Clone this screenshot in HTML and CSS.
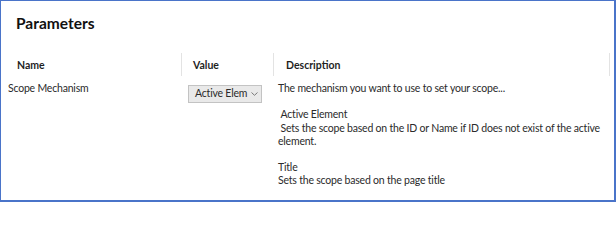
FILE: index.html
```html
<!DOCTYPE html>
<html>
<head>
<meta charset="utf-8">
<link rel="stylesheet" href="styles.css">
</head>
<body>
<div class="frame">
  <h1 class="title">Parameters</h1>
  <div class="table">
    <div class="th th-name">Name</div>
    <div class="th th-value">Value</div>
    <div class="th th-desc">Description</div>
    <div class="td td-name">Scope Mechanism</div>
    <div class="td td-value">
      <div class="dropdown">
        <span class="dd-text">Active Elem</span>
        <svg class="dd-chev" width="7" height="4" viewBox="0 0 7 4"><path d="M0.5 0.5 L3.5 3.3 L6.5 0.5" fill="none" stroke="#7a7a7a" stroke-width="1"/></svg>
      </div>
    </div>
    <div class="td td-desc">The mechanism you want to use to set your scope...

 Active Element
 Sets the scope based on the ID or Name if ID does not exist of the active element.

Title
Sets the scope based on the page title</div>
  </div>
</div>
</body>
</html>
```

FILE: styles.css
```css
html, body {
  margin: 0;
  padding: 0;
  background: #ffffff;
}
body {
  font-family: "Lato", "Open Sans", sans-serif;
  color: #2b2b2b;
}
.frame {
  width: 616px;
  height: 202px;
  box-sizing: border-box;
  border-top: 1px solid #4a74c9;
  border-left: 1px solid #4a74c9;
  border-right: 2px solid #4a74c9;
  border-bottom: 2px solid #4a74c9;
  padding-left: 7px;
  overflow: hidden;
}
.title {
  margin: 12px 0 0 8px;
  font-size: 15.5px;
  line-height: 20px;
  font-weight: 700;
  color: #111111;
}
.table {
  margin-top: 20px;
  display: grid;
  grid-template-columns: 173px 92px 337px;
  grid-template-rows: 23px auto;
}
.th {
  font-size: 10.5px;
  font-weight: 700;
  color: #1f1f1f;
  display: flex;
  align-items: center;
}
.th-name {
  padding-left: 9px;
}
.th-value {
  border-left: 1px solid #e3e3e3;
  padding-left: 11px;
}
.th-desc {
  border-left: 1px solid #e3e3e3;
  border-right: 1px solid #e3e3e3;
  padding-left: 12px;
}
.td {
  font-size: 10.5px;
  letter-spacing: -0.2px;
  line-height: 13.2px;
  color: #2b2b2b;
}
.td-name {
  padding-top: 6px;
}
.td-value {
  padding-top: 9px;
  padding-left: 7px;
}
.td-desc {
  padding-top: 6px;
  padding-left: 5px;
  padding-right: 4px;
  white-space: pre-wrap;
}
.dropdown {
  width: 74px;
  height: 18px;
  box-sizing: border-box;
  background: #e9e9e9;
  border: 1px solid #c3c3c3;
  display: flex;
  align-items: center;
  padding-left: 6px;
  padding-right: 6px;
  gap: 4px;
}
.dd-text {
  font-size: 10.5px;
  letter-spacing: -0.2px;
  color: #2b2b2b;
  white-space: nowrap;
  flex: 1;
}
.dd-chev {
  flex: none;
}
```
